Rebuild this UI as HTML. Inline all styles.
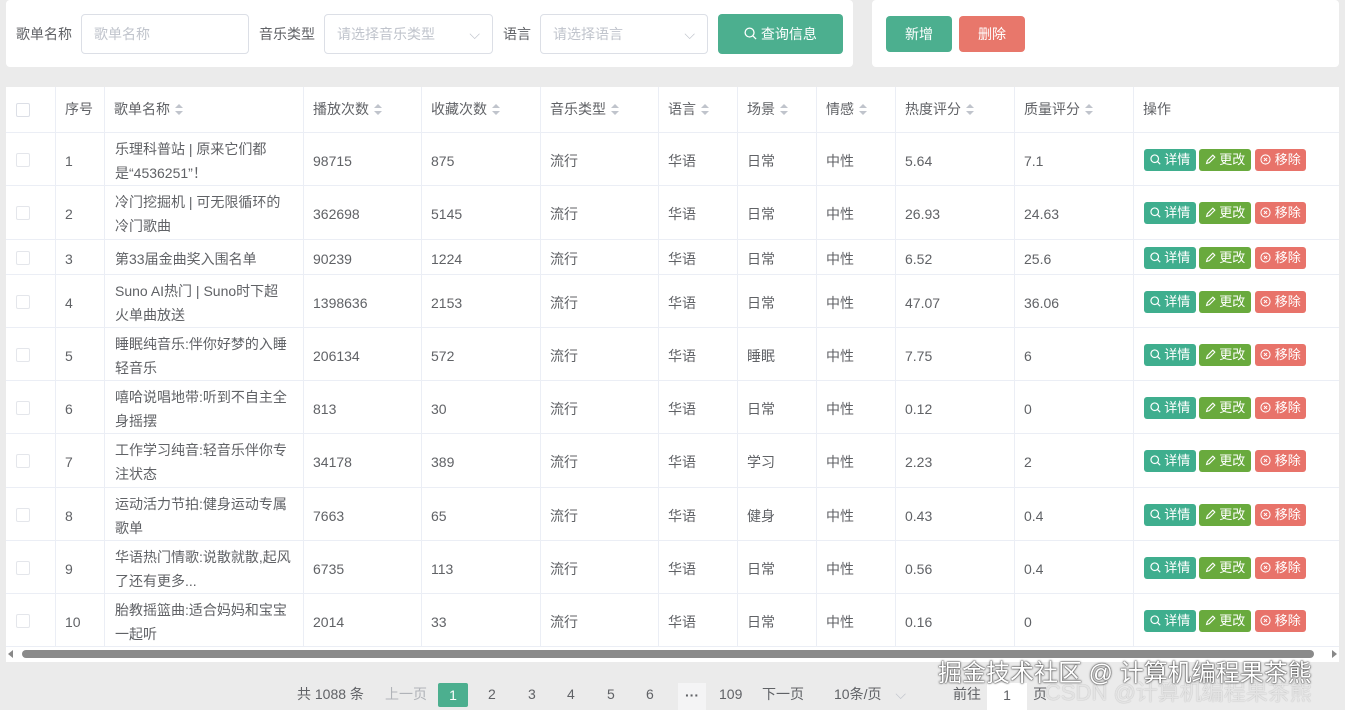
<!DOCTYPE html>
<html><head><meta charset="utf-8"><style>
*{box-sizing:border-box;margin:0;padding:0}
body{width:1345px;height:710px;background:#ebebeb;font-family:"Liberation Sans","Noto Sans CJK SC",sans-serif;font-size:14px;color:#606266;position:relative;overflow:hidden}
.p{position:absolute;background:#fff;border-radius:4px}
.a{position:absolute}
.inp{position:absolute;border:1px solid #dcdfe6;border-radius:4px;height:40px;top:14px;color:#c0c4cc;padding-left:12px;line-height:38px;font-size:14px}
.lbl{position:absolute;top:24px;font-size:14px;color:#606266}
.btn{position:absolute;color:#fff;border-radius:4px;text-align:center;font-size:14px}
.t{position:absolute;left:6px;top:87px;width:1333px;height:575px;background:#fff}
.vl{position:absolute;top:0;width:1px;height:559px;background:#ebeef5}
.hl{position:absolute;left:0;width:1333px;height:1px;background:#ebeef5}
.c{position:absolute;font-size:14px;color:#606266;line-height:24px}
.cb{position:absolute;left:10px;width:14px;height:14px;border:1px solid #dcdfe6;border-radius:2px;background:#fff}
.sb{display:inline-block;width:8px;height:12px;vertical-align:middle;margin-left:5px;position:relative}
.sb:before{content:"";position:absolute;left:0;top:0;border:4px solid transparent;border-bottom:4px solid #c0c4cc;border-top:0}
.sb:after{content:"";position:absolute;left:0;top:7px;border:4px solid transparent;border-top:4px solid #c0c4cc;border-bottom:0}
.ob{position:absolute;height:22px;line-height:22px;color:#fff;font-size:13px;border-radius:3px;text-align:center;width:52px}
.pg{position:absolute;top:683px;font-size:14px;color:#606266;line-height:22px}
</style></head><body>
<div class="p" style="left:6px;top:0;width:847px;height:67px"></div>
<div class="p" style="left:872px;top:0;width:467px;height:67px"></div>
<div class="lbl" style="left:16px">歌单名称</div>
<div class="inp" style="left:81px;width:168px">歌单名称</div>
<div class="lbl" style="left:259px">音乐类型</div>
<div class="inp" style="left:324px;width:169px">请选择音乐类型<span style="position:absolute;right:12px">⌵</span></div>
<div class="lbl" style="left:503px">语言</div>
<div class="inp" style="left:540px;width:168px">请选择语言<span style="position:absolute;right:12px">⌵</span></div>
<div class="btn" style="left:718px;top:14px;width:125px;height:40px;line-height:40px;background:#4caf8f">
<svg width="13" height="13" viewBox="0 0 14 14" style="vertical-align:-1px"><circle cx="6" cy="6" r="4.8" fill="none" stroke="#fff" stroke-width="1.4"/><path d="M9.5 9.5L13 13" stroke="#fff" stroke-width="1.4"/></svg> 查询信息</div>
<div class="btn" style="left:886px;top:16px;width:66px;height:36px;line-height:36px;background:#4caf8f">新增</div>
<div class="btn" style="left:959px;top:16px;width:66px;height:36px;line-height:36px;background:#e8776b">删除</div>

<div class="t">
<div class="vl" style="left:49px"></div><div class="vl" style="left:98px"></div><div class="vl" style="left:297px"></div><div class="vl" style="left:415px"></div><div class="vl" style="left:534px"></div><div class="vl" style="left:652px"></div><div class="vl" style="left:731px"></div><div class="vl" style="left:810px"></div><div class="vl" style="left:889px"></div><div class="vl" style="left:1008px"></div><div class="vl" style="left:1127px"></div>
<div class="hl" style="top:45px"></div><div class="hl" style="top:98px"></div><div class="hl" style="top:152px"></div><div class="hl" style="top:187px"></div><div class="hl" style="top:240px"></div><div class="hl" style="top:293px"></div><div class="hl" style="top:346px"></div><div class="hl" style="top:400px"></div><div class="hl" style="top:453px"></div><div class="hl" style="top:506px"></div><div class="hl" style="top:559px"></div>
<div class="cb" style="top:16px"></div>
<div class="c" style="left:59px;top:10px">序号</div>
<div class="c" style="left:108px;top:10px">歌单名称<span class="sb"></span></div>
<div class="c" style="left:307px;top:10px">播放次数<span class="sb"></span></div>
<div class="c" style="left:425px;top:10px">收藏次数<span class="sb"></span></div>
<div class="c" style="left:544px;top:10px">音乐类型<span class="sb"></span></div>
<div class="c" style="left:662px;top:10px">语言<span class="sb"></span></div>
<div class="c" style="left:741px;top:10px">场景<span class="sb"></span></div>
<div class="c" style="left:820px;top:10px">情感<span class="sb"></span></div>
<div class="c" style="left:899px;top:10px">热度评分<span class="sb"></span></div>
<div class="c" style="left:1018px;top:10px">质量评分<span class="sb"></span></div>
<div class="c" style="left:1137px;top:10px">操作</div>
<div style="position:absolute;left:0;top:561px;width:1333px;height:12px;">
<div style="position:absolute;left:2px;top:2px;border:4px solid transparent;border-right:5px solid #888;border-left:0"></div>
<div style="position:absolute;left:16px;top:2px;width:1292px;height:8px;background:#8a8a8a;border-radius:4px"></div>
<div style="position:absolute;right:2px;top:2px;border:4px solid transparent;border-left:5px solid #888;border-right:0"></div>
</div>
</div>
<div id="rows"></div>
<script>
var rows=[["1","乐理科普站 | 原来它们都<br>是“4536251”！","98715","875","日常","5.64","7.1",132,185],
["2","冷门挖掘机 | 可无限循环的<br>冷门歌曲","362698","5145","日常","26.93","24.63",185,239],
["3","第33届金曲奖入围名单","90239","1224","日常","6.52","25.6",239,274],
["4","Suno AI热门 | Suno时下超<br>火单曲放送","1398636","2153","日常","47.07","36.06",274,327],
["5","睡眠纯音乐:伴你好梦的入睡<br>轻音乐","206134","572","睡眠","7.75","6",327,380],
["6","嘻哈说唱地带:听到不自主全<br>身摇摆","813","30","日常","0.12","0",380,433],
["7","工作学习纯音:轻音乐伴你专<br>注状态","34178","389","学习","2.23","2",433,487],
["8","运动活力节拍:健身运动专属<br>歌单","7663","65","健身","0.43","0.4",487,540],
["9","华语热门情歌:说散就散,起风<br>了还有更多...","6735","113","日常","0.56","0.4",540,593],
["10","胎教摇篮曲:适合妈妈和宝宝<br>一起听","2014","33","日常","0.16","0",593,646]];
var h="";
rows.forEach(function(r){var m=(r[7]+r[8])/2+2;var two=r[1].indexOf("<br>")>0;
var t=m-12;
h+='<div class="cb" style="top:'+(m-8)+'px;left:16px;border-color:#e4e6eb"></div>';
h+='<div class="c" style="left:65px;top:'+t+'px">'+r[0]+'</div>';
h+='<div class="c" style="left:115px;top:'+(two?m-24:t)+'px">'+r[1]+'</div>';
h+='<div class="c" style="left:313px;top:'+t+'px">'+r[2]+'</div>';
h+='<div class="c" style="left:431px;top:'+t+'px">'+r[3]+'</div>';
h+='<div class="c" style="left:550px;top:'+t+'px">流行</div>';
h+='<div class="c" style="left:668px;top:'+t+'px">华语</div>';
h+='<div class="c" style="left:747px;top:'+t+'px">'+r[4]+'</div>';
h+='<div class="c" style="left:826px;top:'+t+'px">中性</div>';
h+='<div class="c" style="left:905px;top:'+t+'px">'+r[5]+'</div>';
h+='<div class="c" style="left:1024px;top:'+t+'px">'+r[6]+'</div>';
var bt=m-12;
h+='<div class="ob" style="left:1144px;top:'+bt+'px;background:#3fae8e"><svg width="11" height="11" viewBox="0 0 14 14" style="vertical-align:-1px"><circle cx="6" cy="6" r="4.8" fill="none" stroke="#fff" stroke-width="1.5"/><path d="M9.5 9.5L13 13" stroke="#fff" stroke-width="1.5"/></svg> 详情</div>';
h+='<div class="ob" style="left:1199px;top:'+bt+'px;background:#69aa3d"><svg width="11" height="11" viewBox="0 0 14 14" style="vertical-align:-1px"><path d="M2 12L3 8.5 10 1.5 12.5 4 5.5 11Z" fill="none" stroke="#fff" stroke-width="1.4"/></svg> 更改</div>';
h+='<div class="ob" style="left:1255px;top:'+bt+'px;width:51px;background:#e8736a"><svg width="11" height="11" viewBox="0 0 14 14" style="vertical-align:-1px"><circle cx="7" cy="7" r="5.8" fill="none" stroke="#fff" stroke-width="1.3"/><path d="M5 5L9 9M9 5L5 9" stroke="#fff" stroke-width="1.3"/></svg> 移除</div>';
});
document.getElementById("rows").innerHTML=h;
</script>
<div class="pg" style="left:297px">共 1088 条</div>
<div class="pg" style="left:385px;color:#b0b3b8">上一页</div>
<div class="a" style="left:438px;top:683px;width:30px;height:24px;background:#4caf8f;color:#fff;text-align:center;line-height:24px;border-radius:2px">1</div>
<div class="pg" style="left:488px">2</div><div class="pg" style="left:528px">3</div><div class="pg" style="left:567px">4</div><div class="pg" style="left:607px">5</div><div class="pg" style="left:646px">6</div>
<div class="a" style="left:678px;top:683px;width:28px;height:27px;background:#f4f4f5;text-align:center;line-height:24px;font-weight:bold">···</div>
<div class="pg" style="left:719px">109</div>
<div class="pg" style="left:762px">下一页</div>
<div class="pg" style="left:834px">10条/页 <span style="color:#c0c4cc;margin-left:10px">⌵</span></div>
<div class="pg" style="left:953px">前往</div>
<div class="a" style="left:987px;top:683px;width:40px;height:27px;background:#fff;text-align:center;line-height:24px">1</div>
<div class="pg" style="left:1033px">页</div>
<div class="a" style="left:1045px;top:678px;font-size:22px;color:rgba(255,255,255,0.7);text-shadow:0 0 1px #999;line-height:30px">CSDN @计算机编程果茶熊</div>
<div class="a" style="left:938px;top:659px;font-size:24px;color:#fff;text-shadow:0 0 2px #333,0 0 1px #000;line-height:30px">掘金技术社区 @ 计算机编程果茶熊</div>
</body></html>
